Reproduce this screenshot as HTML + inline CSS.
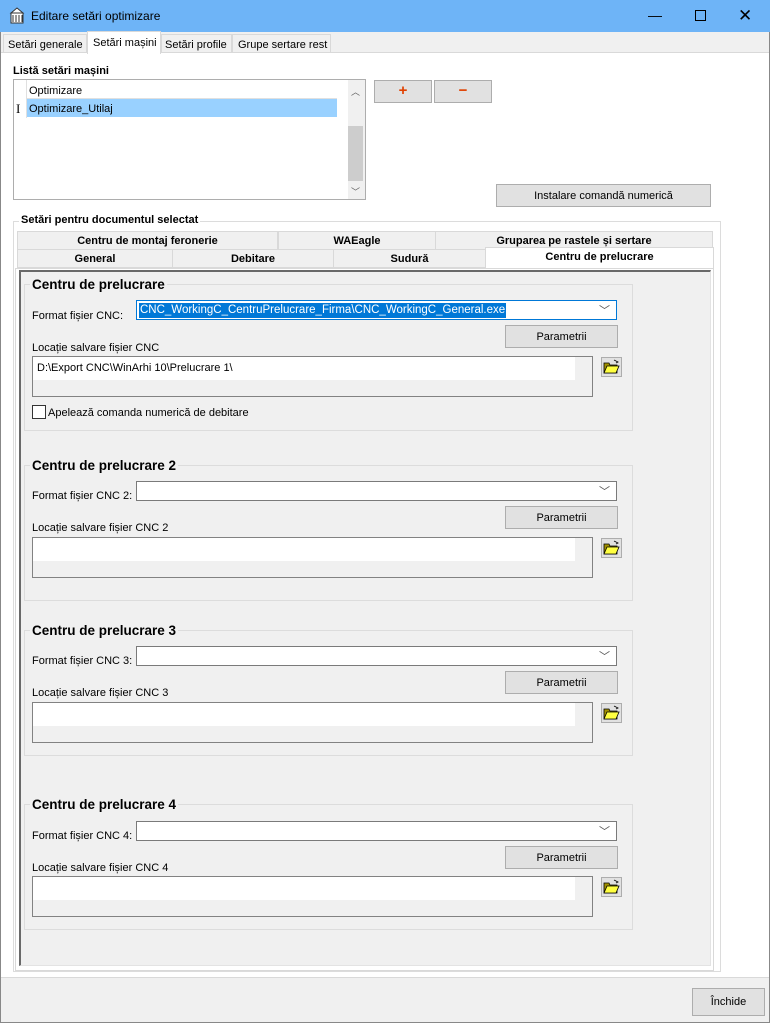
<!DOCTYPE html>
<html><head><meta charset="utf-8"><style>
*{box-sizing:border-box;margin:0;padding:0}
body{width:770px;height:1023px;position:relative;background:#f0f0f0;font-family:"Liberation Sans",sans-serif;font-size:11px;color:#000;overflow:hidden}
.a{position:absolute}
.t{position:absolute;white-space:nowrap;margin-top:1px}
.btn{position:absolute;background:#e1e1e1;border:1px solid #adadad;text-align:center;font-size:11px}
.b{font-weight:bold}
.grp{position:absolute;border:1px solid #dcdcdc}
.combo{position:absolute;background:#fff;border:1px solid #7a7a7a;height:20px}
.ta{position:absolute;background:#fff;border:1px solid #828282}
.fold{position:absolute;width:21px;height:20px;background:#e1e1e1;border:1px solid #adadad}
</style></head><body>
<div class="a" style="left:0;top:0;width:770px;height:32px;background:#6eb4f7"></div>
<svg class="a" style="left:9px;top:7px" width="16" height="18" viewBox="0 0 16 18"><path d="M2 6 L8 1 L14 6 Z" fill="#fff" stroke="#333"/><rect x="2" y="6" width="12" height="10" fill="#fff" stroke="#333"/><path d="M4 8v7M7 8v7M10 8v7M13 8v7" stroke="#333"/></svg>
<div class="t" style="left:31px;top:8px;font-size:12px">Editare setări optimizare</div>
<div class="t" style="left:648px;top:6px;font-size:14px">—</div>
<div class="a" style="left:695px;top:10px;width:11px;height:11px;border:1px solid #000"></div>
<div class="t" style="left:738px;top:5px;font-size:17px">✕</div>
<div class="a" style="left:0;top:32px;width:1px;height:991px;background:#888"></div>
<div class="a" style="left:769px;top:32px;width:1px;height:991px;background:#888"></div>
<div class="a" style="left:0;top:1022px;width:770px;height:1px;background:#888"></div>
<div class="a" style="left:3px;top:34px;width:84px;height:19px;border:1px solid #d9d9d9;background:#f0f0f0"></div><div class="t" style="left:8px;top:38px">Setări generale</div>
<div class="a" style="left:161px;top:34px;width:71px;height:19px;border:1px solid #d9d9d9"></div><div class="t" style="left:165px;top:38px">Setări profile</div>
<div class="a" style="left:232px;top:34px;width:99px;height:19px;border:1px solid #d9d9d9"></div><div class="t" style="left:238px;top:38px">Grupe sertare rest</div>
<div class="a" style="left:1px;top:52px;width:768px;height:926px;background:#fff;border-top:1px solid #d9d9d9;border-bottom:1px solid #d9d9d9"></div>
<div class="a" style="left:87px;top:31px;width:74px;height:23px;background:#fff;border:1px solid #d9d9d9;border-bottom:none"></div><div class="t" style="left:93px;top:36px">Setări mașini</div>
<div class="t b" style="left:13px;top:64px">Listă setări mașini</div>
<div class="a" style="left:13px;top:79px;width:353px;height:121px;border:1px solid #adadad;background:#fff"></div>
<div class="a" style="left:27px;top:98px;width:310px;height:1px;background:#e0e0e0"></div>
<div class="a" style="left:27px;top:99px;width:310px;height:18px;background:#99d1ff"></div>
<div class="a" style="left:26px;top:80px;width:1px;height:38px;background:#e0e0e0"></div>
<div class="t" style="left:29px;top:84px">Optimizare</div>
<div class="t" style="left:16px;top:100px;font-family:'Liberation Serif',serif;font-size:13px">I</div>
<div class="t" style="left:29px;top:102px">Optimizare_Utilaj</div>
<div class="a" style="left:348px;top:80px;width:17px;height:119px;background:#f0f0f0"></div>
<div class="a" style="left:348px;top:126px;width:15px;height:55px;background:#cdcdcd"></div>
<div class="t" style="left:351px;top:84px;font-size:9px;color:#606060">︿</div>
<div class="t" style="left:351px;top:184px;font-size:9px;color:#606060">﹀</div>
<div class="btn" style="left:374px;top:80px;width:58px;height:23px"><span style="color:#e04000;font-weight:bold;font-size:15px;line-height:20px">+</span></div>
<div class="btn" style="left:434px;top:80px;width:58px;height:23px"><span style="color:#e04000;font-weight:bold;font-size:15px;line-height:19px">−</span></div>
<div class="btn" style="left:496px;top:184px;width:215px;height:23px;line-height:22px">Instalare comandă numerică</div>
<div class="grp" style="left:13px;top:221px;width:708px;height:751px"></div>
<div class="t b" style="left:19px;top:213px;background:#fff;padding:0 2px">Setări pentru documentul selectat</div>
<div class="a" style="left:17px;top:231px;width:696px;height:37px;background:#f0f0f0"></div>
<div class="a" style="left:17px;top:231px;width:261px;height:19px;border:1px solid #d9d9d9"></div><div class="t b" style="left:17px;width:261px;text-align:center;top:234px">Centru de montaj feronerie</div>
<div class="a" style="left:278px;top:231px;width:158px;height:19px;border:1px solid #d9d9d9"></div><div class="t b" style="left:278px;width:158px;text-align:center;top:234px">WAEagle</div>
<div class="a" style="left:435px;top:231px;width:278px;height:19px;border:1px solid #d9d9d9"></div><div class="t b" style="left:435px;width:278px;text-align:center;top:234px">Gruparea pe rastele și sertare</div>
<div class="a" style="left:17px;top:249px;width:156px;height:19px;border:1px solid #d9d9d9"></div><div class="t b" style="left:17px;width:156px;text-align:center;top:252px">General</div>
<div class="a" style="left:172px;top:249px;width:162px;height:19px;border:1px solid #d9d9d9"></div><div class="t b" style="left:172px;width:162px;text-align:center;top:252px">Debitare</div>
<div class="a" style="left:333px;top:249px;width:153px;height:19px;border:1px solid #d9d9d9"></div><div class="t b" style="left:333px;width:153px;text-align:center;top:252px">Sudură</div>
<div class="a" style="left:485px;top:247px;width:229px;height:22px;background:#fff;border:1px solid #d9d9d9;border-bottom:none"></div><div class="t b" style="left:485px;width:229px;text-align:center;top:250px">Centru de prelucrare</div>
<div class="a" style="left:15px;top:268px;width:699px;height:703px;border:1px solid #d9d9d9;background:#fff"></div>
<div class="a" style="left:19px;top:270px;width:692px;height:696px;background:#f0f0f0;border-left:2px solid #696969;border-top:2px solid #696969;border-right:1px solid #e3e3e3;border-bottom:1px solid #e3e3e3"></div>

<div class="grp" style="left:24px;top:284px;width:609px;height:147px"></div>
<div class="t b" style="left:30px;top:276px;font-size:13.5px;background:#f0f0f0;padding:0 2px">Centru de prelucrare</div>
<div class="t" style="left:32px;top:309px">Format fișier CNC:</div>
<div class="combo" style="left:136px;top:300px;width:481px;border-color:#0078d7"><span class="a" style="left:2px;top:2px;background:#0078d7;color:#fff;padding:0 1px;line-height:15px;font-size:11.5px">CNC_WorkingC_CentruPrelucrare_Firma\CNC_WorkingC_General.exe</span><span class="a" style="right:6px;top:1px;color:#555;font-size:11px">﹀</span></div>
<div class="btn" style="left:505px;top:325px;width:113px;height:23px;line-height:22px">Parametrii</div>
<div class="t" style="left:32px;top:341px">Locație salvare fișier CNC</div>
<div class="ta" style="left:32px;top:356px;width:561px;height:41px"><div class="a" style="left:0;top:23px;width:559px;height:16px;background:#f0f0f0"></div><div class="a" style="left:542px;top:0;width:17px;height:23px;background:#f0f0f0"></div><span class="t" style="left:4px;top:4px">D:\Export CNC\WinArhi 10\Prelucrare 1\</span></div>
<div class="fold" style="left:601px;top:357px"><svg width="19" height="18" viewBox="0 0 19 18"><path d="M2 5h5l1 2h7v8H2z" fill="#a09000" stroke="#000" stroke-width="0.8"/><path d="M2 15l3-7h12l-3 7z" fill="#ffff40" stroke="#000" stroke-width="0.8"/><path d="M12 2l4 2-2 1" fill="none" stroke="#000" stroke-width="0.8"/></svg></div>
<div class="a" style="left:32px;top:405px;width:14px;height:14px;border:1px solid #333;background:#fff"></div>
<div class="t" style="left:48px;top:406px">Apelează comanda numerică de debitare</div>

<div class="grp" style="left:24px;top:465px;width:609px;height:136px"></div>
<div class="t b" style="left:30px;top:457px;font-size:13.5px;background:#f0f0f0;padding:0 2px">Centru de prelucrare 2</div>
<div class="t" style="left:32px;top:489px">Format fișier CNC 2:</div>
<div class="combo" style="left:136px;top:481px;width:481px"><span class="a" style="right:6px;top:1px;color:#555;font-size:11px">﹀</span></div>
<div class="btn" style="left:505px;top:506px;width:113px;height:23px;line-height:22px">Parametrii</div>
<div class="t" style="left:32px;top:521px">Locație salvare fișier CNC 2</div>
<div class="ta" style="left:32px;top:537px;width:561px;height:41px"><div class="a" style="left:0;top:23px;width:559px;height:16px;background:#f0f0f0"></div><div class="a" style="left:542px;top:0;width:17px;height:23px;background:#f0f0f0"></div></div>
<div class="fold" style="left:601px;top:538px"><svg width="19" height="18" viewBox="0 0 19 18"><path d="M2 5h5l1 2h7v8H2z" fill="#a09000" stroke="#000" stroke-width="0.8"/><path d="M2 15l3-7h12l-3 7z" fill="#ffff40" stroke="#000" stroke-width="0.8"/><path d="M12 2l4 2-2 1" fill="none" stroke="#000" stroke-width="0.8"/></svg></div>

<div class="grp" style="left:24px;top:630px;width:609px;height:126px"></div>
<div class="t b" style="left:30px;top:622px;font-size:13.5px;background:#f0f0f0;padding:0 2px">Centru de prelucrare 3</div>
<div class="t" style="left:32px;top:654px">Format fișier CNC 3:</div>
<div class="combo" style="left:136px;top:646px;width:481px"><span class="a" style="right:6px;top:1px;color:#555;font-size:11px">﹀</span></div>
<div class="btn" style="left:505px;top:671px;width:113px;height:23px;line-height:22px">Parametrii</div>
<div class="t" style="left:32px;top:686px">Locație salvare fișier CNC 3</div>
<div class="ta" style="left:32px;top:702px;width:561px;height:41px"><div class="a" style="left:0;top:23px;width:559px;height:16px;background:#f0f0f0"></div><div class="a" style="left:542px;top:0;width:17px;height:23px;background:#f0f0f0"></div></div>
<div class="fold" style="left:601px;top:703px"><svg width="19" height="18" viewBox="0 0 19 18"><path d="M2 5h5l1 2h7v8H2z" fill="#a09000" stroke="#000" stroke-width="0.8"/><path d="M2 15l3-7h12l-3 7z" fill="#ffff40" stroke="#000" stroke-width="0.8"/><path d="M12 2l4 2-2 1" fill="none" stroke="#000" stroke-width="0.8"/></svg></div>

<div class="grp" style="left:24px;top:804px;width:609px;height:126px"></div>
<div class="t b" style="left:30px;top:796px;font-size:13.5px;background:#f0f0f0;padding:0 2px">Centru de prelucrare 4</div>
<div class="t" style="left:32px;top:829px">Format fișier CNC 4:</div>
<div class="combo" style="left:136px;top:821px;width:481px"><span class="a" style="right:6px;top:1px;color:#555;font-size:11px">﹀</span></div>
<div class="btn" style="left:505px;top:846px;width:113px;height:23px;line-height:22px">Parametrii</div>
<div class="t" style="left:32px;top:861px">Locație salvare fișier CNC 4</div>
<div class="ta" style="left:32px;top:876px;width:561px;height:41px"><div class="a" style="left:0;top:23px;width:559px;height:16px;background:#f0f0f0"></div><div class="a" style="left:542px;top:0;width:17px;height:23px;background:#f0f0f0"></div></div>
<div class="fold" style="left:601px;top:877px"><svg width="19" height="18" viewBox="0 0 19 18"><path d="M2 5h5l1 2h7v8H2z" fill="#a09000" stroke="#000" stroke-width="0.8"/><path d="M2 15l3-7h12l-3 7z" fill="#ffff40" stroke="#000" stroke-width="0.8"/><path d="M12 2l4 2-2 1" fill="none" stroke="#000" stroke-width="0.8"/></svg></div>

<div class="btn" style="left:692px;top:988px;width:73px;height:28px;line-height:27px">Închide</div>
</body></html>
